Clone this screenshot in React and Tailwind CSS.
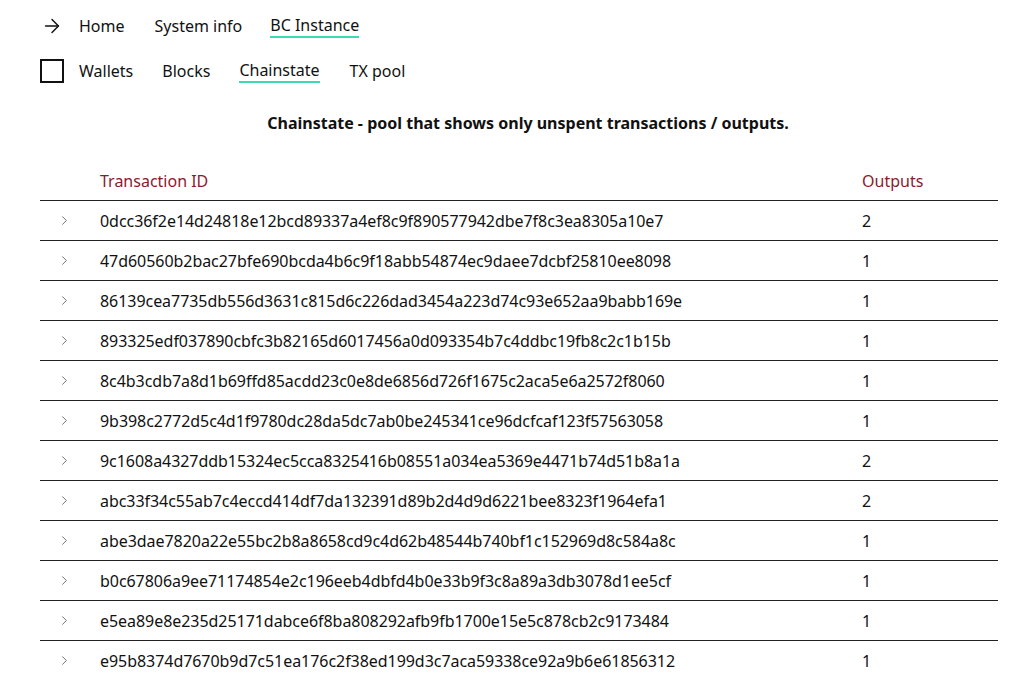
import { ArrowRight, ChevronRight } from 'lucide-react';

const rows = [
  ['0dcc36f2e14d24818e12bcd89337a4ef8c9f890577942dbe7f8c3ea8305a10e7', 2],
  ['47d60560b2bac27bfe690bcda4b6c9f18abb54874ec9daee7dcbf25810ee8098', 1],
  ['86139cea7735db556d3631c815d6c226dad3454a223d74c93e652aa9babb169e', 1],
  ['893325edf037890cbfc3b82165d6017456a0d093354b7c4ddbc19fb8c2c1b15b', 1],
  ['8c4b3cdb7a8d1b69ffd85acdd23c0e8de6856d726f1675c2aca5e6a2572f8060', 1],
  ['9b398c2772d5c4d1f9780dc28da5dc7ab0be245341ce96dcfcaf123f57563058', 1],
  ['9c1608a4327ddb15324ec5cca8325416b08551a034ea5369e4471b74d51b8a1a', 2],
  ['abc33f34c55ab7c4eccd414df7da132391d89b2d4d9d6221bee8323f1964efa1', 2],
  ['abe3dae7820a22e55bc2b8a8658cd9c4d62b48544b740bf1c152969d8c584a8c', 1],
  ['b0c67806a9ee71174854e2c196eeb4dbfd4b0e33b9f3c8a89a3db3078d1ee5cf', 1],
  ['e5ea89e8e235d25171dabce6f8ba808292afb9fb1700e15e5c878cb2c9173484', 1],
  ['e95b8374d7670b9d7c51ea176c2f38ed199d3c7aca59338ce92a9b6e61856312', 1],
];

export default function App() {
  return (
    <div className="min-h-screen bg-white text-[16px] text-[#111] font-['Noto_Sans',sans-serif]">
      <div className="pl-10 pr-[36px] pt-[13px]">
        <nav className="flex items-center h-[26px]">
          <ArrowRight size={22} strokeWidth={1.6} className="ml-[1px] mr-[16px]" />
          <span className="mr-[30px]">Home</span>
          <span className="mr-[28px]">System info</span>
          <span className="border-b-2 border-[#3ddbb0] leading-[21px]">BC Instance</span>
        </nav>
        <nav className="flex items-center h-[26px] mt-[19px]">
          <div className="w-[24px] h-[24px] border-2 border-[#111] mr-[15px]" />
          <span className="mr-[29px]">Wallets</span>
          <span className="mr-[29px]">Blocks</span>
          <span className="mr-[30px] border-b-2 border-[#3ddbb0] leading-[21px]">Chainstate</span>
          <span>TX pool</span>
        </nav>
        <h1 className="mt-[27px] text-center font-bold pl-[18px]">
          Chainstate - pool that shows only unspent transactions / outputs.
        </h1>
        <table className="w-full mt-[34px] border-collapse">
          <thead>
            <tr className="border-b border-[#222]">
              <th className="w-[60px]" />
              <th className="text-left font-normal text-[#8b1a2e] pb-[7px]">Transaction ID</th>
              <th className="text-left font-normal text-[#8b1a2e] w-[136px] pb-[7px]">Outputs</th>
            </tr>
          </thead>
          <tbody>
            {rows.map(([id, out]) => (
              <tr key={id} className="border-b border-[#222] h-[40px]">
                <td className="pl-[17px]">
                  <ChevronRight size={15} strokeWidth={1.5} className="text-[#666]" />
                </td>
                <td className="tracking-[-0.05px]">{id}</td>
                <td>{out}</td>
              </tr>
            ))}
          </tbody>
        </table>
      </div>
    </div>
  );
}
